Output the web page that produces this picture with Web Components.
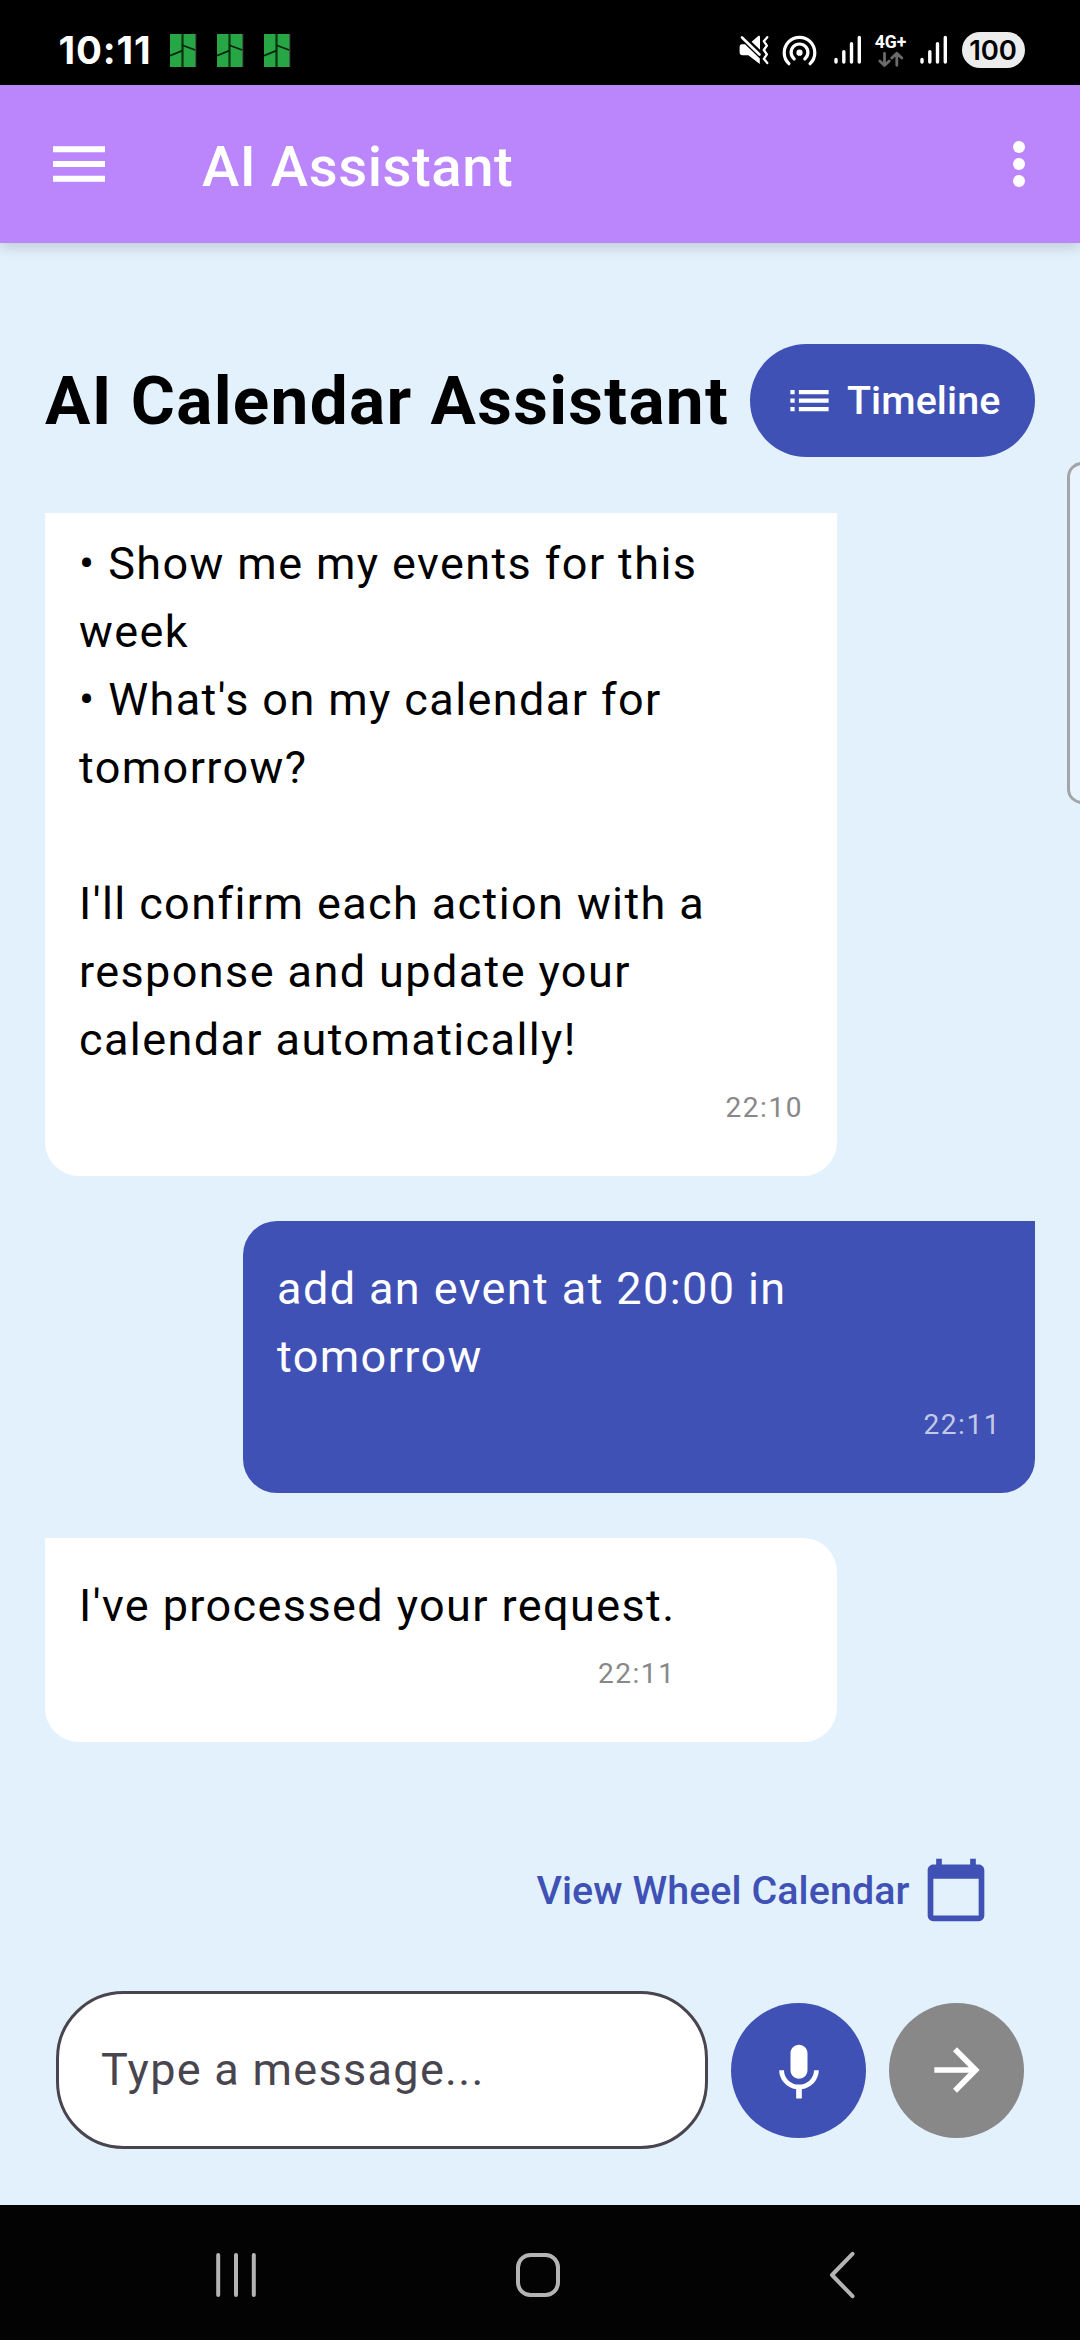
<!DOCTYPE html>
<html lang="en">
<head>
<meta charset="utf-8">
<title>AI Assistant</title>
<style>
html, body { margin: 0; padding: 0; }
body { width: 1080px; height: 2340px; overflow: hidden; background: #e3f1fd; font-family: Roboto, sans-serif; }
</style>
</head>
<body>
<assistant-app></assistant-app>
<script>
const define = (name, html) => {
  const template = document.createElement('template');
  template.innerHTML = html;
  customElements.define(name, class extends HTMLElement {
    constructor() {
      super();
      this.attachShadow({ mode: 'open' }).append(template.content.cloneNode(true));
    }
  });
};

define('task-tile', `
<style>:host{display:block;width:27px;height:33px} svg{display:block}</style>
<svg width="27" height="33" viewBox="0 0 27 33">
  <rect width="26.3" height="33" fill="#3b4a40"/>
  <rect width="25.2" height="33" fill="#27a645"/>
  <rect x="11.4" width="2.2" height="33" fill="#08350f"/>
  <path d="M0 21.6 12.4 16.6M12.4 11.2 25.2 16" stroke="#04230a" stroke-width="1.7" fill="none"/>
</svg>`);

define('signal-bars', `
<style>:host{display:block} svg{display:block}</style>
<svg width="28" height="30" viewBox="0 0 28 30" stroke="#fff" stroke-width="3.4" stroke-linecap="round">
  <path d="M2 24.5V27M9.8 16.7V27M17.5 8.7V27M25.3 2.5V27"/>
</svg>`);

define('battery-pill', `
<style>:host{display:flex;align-items:center;justify-content:center;width:63px;height:36px;border-radius:18px;background:#ececec;color:#000;font:600 27.5px/36px Inter,sans-serif;letter-spacing:-.2px}</style>
<slot></slot>`);

define('status-bar', `
<style>
:host{display:flex;height:85px;box-sizing:border-box;padding:15px 55.5px 0 58.5px;background:#000;color:#fff;align-items:center}
.clock{font:700 38.5px/1 Inter,sans-serif;letter-spacing:.9px;width:111.5px}
.tiles{display:flex;gap:20px;margin-top:1px}
.right{margin-left:auto;display:flex;align-items:center}
.mute{margin-right:13.5px}.hot{margin-right:16.5px}
.net{display:flex;flex-direction:column;align-items:center;width:36px;margin:0 11.5px 0 11px}
.net b{font:700 17.6px/17px Roboto,sans-serif}
svg{display:block}
</style>
<span class="clock">10:11</span>
<div class="tiles"><task-tile></task-tile><task-tile></task-tile><task-tile></task-tile></div>
<div class="right">
  <svg class="mute" width="30" height="30" viewBox="739 35 30 30">
    <path fill="#fff" d="M741.5 44.2H745L759.8 58.5V64L748.3 55.2H742.5Q739.6 55.2 739.6 52V47Q739.6 44.5 741.5 44.2ZM751.6 41.8 758.5 35.8Q760 35.2 760 37V49.8Z"/>
    <path fill="none" stroke="#fff" stroke-width="2.6" stroke-linecap="round" d="M742 37.5 759.5 54.5"/>
    <path fill="none" stroke="#fff" stroke-width="2.3" stroke-linecap="round" stroke-linejoin="round" d="M767.3 37.2 763.8 41.2 766.9 45.6 763.8 50 766.9 54.4 763.8 58.8 767.3 63"/>
  </svg>
  <svg class="hot" width="35" height="32" viewBox="782.5 33.5 35 32" fill="none" stroke="#fff" stroke-width="3.2" stroke-linecap="round">
    <path d="M789.4 63.2A15.3 15.3 0 1 1 810.6 63.2"/>
    <path d="M794.7 58.4A8.4 8.4 0 1 1 805.3 58.4"/>
    <circle cx="800" cy="52.2" r="3.1" fill="#fff" stroke="none"/>
  </svg>
  <signal-bars></signal-bars>
  <div class="net"><b>4G+</b>
    <svg width="26" height="16" viewBox="878 51 26 16" fill="none" stroke="#6b6b6b" stroke-width="2.8" stroke-linecap="round" stroke-linejoin="round"><path d="M884.5 53.5V65.3M879.8 61 884.5 65.5 889.2 61M896.8 65.3V53.5M891.8 58 896.8 53.2 901.8 58"/></svg>
  </div>
  <signal-bars></signal-bars>
  <battery-pill style="margin-left:13.5px">100</battery-pill>
</div>`);

define('app-bar', `
<style>
:host{display:flex;height:158px;box-sizing:border-box;padding:0 55.5px 0 53px;align-items:center;background:#bb86fc;color:#fff;box-shadow:0 3px 14px rgba(0,0,0,.19);z-index:1}
h1{flex:1;margin:7px 0 0 97px;font:500 56.25px/1.2 Roboto,sans-serif;letter-spacing:.54px}
svg{display:block}
</style>
<svg width="52" height="36" viewBox="0 0 52 36" fill="#fff"><path d="M0 .3H52V6.2H0ZM0 15H52V21H0ZM0 29.8H52V35.7H0Z"/></svg>
<h1><slot></slot></h1>
<svg width="12" height="46" viewBox="0 0 12 46" fill="#fff"><circle cx="6" cy="6" r="6"/><circle cx="6" cy="23" r="6"/><circle cx="6" cy="40" r="6"/></svg>`);

define('timeline-button', `
<style>
:host{display:flex;flex:none;align-items:center;width:285px;height:113px;box-sizing:border-box;padding-left:33.5px;gap:12.5px;border-radius:57px;background:#3f51b5;color:#fff;font:500 39.4px/1 Roboto,sans-serif;letter-spacing:.1px}
</style>
<svg width="51" height="51" viewBox="0 0 24 24" fill="#fff"><path d="M3 13h2v-2H3v2zm0 4h2v-2H3v2zm0-8h2V7H3v2zm4 4h14v-2H7v2zm0 4h14v-2H7v2zM7 7v2h14V7H7z"/></svg>
<slot></slot>`);

define('chat-bubble', `
<style>
:host{display:block;flex:none;width:792px;box-sizing:border-box;padding:34px;border-radius:0 34px 34px 34px;background:#fff;color:#000;--time:#888}
:host([mine]){align-self:flex-end;border-radius:34px 0 34px 34px;background:#3f51b5;color:#fff;--time:rgba(255,255,255,.7)}
:host([clipped]){padding-top:17px;border-top-left-radius:0;border-top-right-radius:0}
.column{display:flex;flex-direction:column;width:fit-content}
.text{font:400 45px/68px Roboto,sans-serif;letter-spacing:1.4px;white-space:pre-line}
.time{align-self:flex-end;font:400 28.1px/68px Roboto,sans-serif;letter-spacing:1.5px;color:var(--time)}
</style>
<div class="column"><div class="text"><slot></slot></div><div class="time"><slot name="time"></slot></div></div>`);

define('wheel-link', `
<style>
:host{display:flex;height:135px;align-items:center;justify-content:flex-end;gap:12.5px;padding-right:90px;color:#3f51b5;font:500 39.4px/1 Roboto,sans-serif;letter-spacing:.08px}
span{margin-top:2px}
</style>
<span><slot></slot></span>
<svg width="68" height="68" viewBox="0 0 24 24" fill="currentColor"><path d="M20 3h-1V1h-2v2H7V1H5v2H4c-1.1 0-2 .9-2 2v16c0 1.1.9 2 2 2h16c1.1 0 2-.9 2-2V5c0-1.1-.9-2-2-2zm0 18H4V8h16v13z"/></svg>`);

define('message-composer', `
<style>
:host{display:flex;height:158px;align-items:center;padding:0 56px;gap:23px}
.field{flex:1;height:158px;box-sizing:border-box;border:3px solid #49454f;border-radius:67.5px;background:#fff;color:#49454f;padding-left:42px;font:400 45px/152px Roboto,sans-serif;letter-spacing:1.3px}
.round{width:135px;height:135px;border-radius:50%;display:flex;align-items:center;justify-content:center}
.mic{background:#3f51b5}.mic svg{margin-top:6px}
.send{background:#888}
</style>
<div class="field"><slot></slot></div>
<div class="round mic"><svg width="68" height="68" viewBox="0 0 24 24" fill="#fff"><path d="M12 14c1.66 0 2.99-1.34 2.99-3L15 5c0-1.66-1.34-3-3-3S9 3.34 9 5v6c0 1.66 1.34 3 3 3zm5.3-3c0 3-2.54 5.1-5.3 5.1S6.7 14 6.7 11H5c0 3.41 2.72 6.23 6 6.72V21h2v-3.28c3.28-.48 6-3.3 6-6.72h-1.7z"/></svg></div>
<div class="round send"><svg width="68" height="68" viewBox="0 0 24 24" fill="#fff"><path d="M12 4l-1.41 1.41L16.17 11H4v2h12.17l-5.58 5.59L12 20l8-8z"/></svg></div>`);

define('edge-handle', `
<style>:host{position:absolute;right:-23px;top:462px;width:36px;height:342px;box-sizing:border-box;border:3px solid #a3a5a7;border-radius:15px;background:#e9f4fe}</style>`);

define('nav-bar', `
<style>
:host{display:flex;height:135px;box-sizing:border-box;padding:5px 0 0 214px;background:#030303;align-items:center}
svg{display:block;fill:none;stroke:#b4b4b4;stroke-width:4;stroke-linecap:round;stroke-linejoin:round}
.home{margin:0 267px 0 257px}
</style>
<svg width="44" height="46" viewBox="0 0 44 46"><path d="M4.2 3V43M22 3V43M39.8 3V43"/></svg>
<svg class="home" width="46" height="46" viewBox="0 0 46 46"><rect x="3" y="3" width="40" height="40" rx="12.5"/></svg>
<svg width="28" height="48" viewBox="0 0 28 48"><path d="M24.5 2.8 4 24 24.5 45.2"/></svg>`);

define('assistant-app', `
<style>
:host{display:flex;flex-direction:column;width:1080px;height:2340px;position:relative;overflow:hidden;background:#e3f1fd}
main{flex:1;min-height:0;display:flex;flex-direction:column;padding:101px 0 56px}
header{display:flex;align-items:center;justify-content:space-between;height:113px;padding:0 45px;margin-bottom:56px}
h2{margin:0;font:700 67.5px/1.2 Roboto,sans-serif;letter-spacing:1.3px;white-space:nowrap;color:#000}
section{flex:1;min-height:0;overflow:hidden;display:flex;flex-direction:column;gap:45px;padding:0 45px}
wheel-link{margin-bottom:34px}
</style>
<status-bar></status-bar>
<app-bar>AI Assistant</app-bar>
<main>
  <header><h2>AI Calendar Assistant</h2><timeline-button>Timeline</timeline-button></header>
  <section>
    <chat-bubble clipped>• Show me my events for this week
• What's on my calendar for tomorrow?

I'll confirm each action with a response and update your calendar automatically!<span slot="time">22:10</span></chat-bubble>
    <chat-bubble mine>add an event at 20:00 in tomorrow<span slot="time">22:11</span></chat-bubble>
    <chat-bubble>I've processed your request.<span slot="time">22:11</span></chat-bubble>
  </section>
  <wheel-link>View Wheel Calendar</wheel-link>
  <message-composer>Type a message...</message-composer>
</main>
<nav-bar></nav-bar>
<edge-handle></edge-handle>`);
</script>
</body>
</html>
